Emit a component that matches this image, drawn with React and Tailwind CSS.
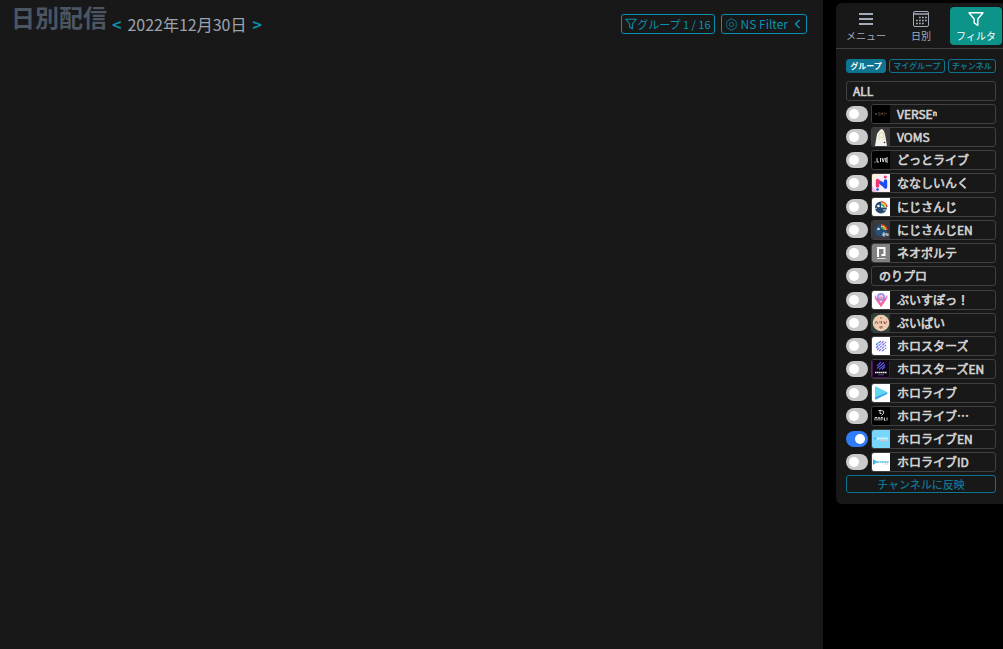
import React, { useState } from "react";

const ART = {
  verse: (
    <>
      <rect width="18" height="18" fill="#000" />
      <path d="M3 8l1 2 1-2M6 8h2M6 10h2" stroke="#666" strokeWidth=".7" fill="none" />
      <path d="M9 10V8h1.5v2M11.5 8h1.5M11.5 10h1.5" stroke="#8a4c34" strokeWidth=".7" fill="none" />
      <path d="M14 8v1" stroke="#4a7fb5" strokeWidth=".8" />
    </>
  ),
  voms: (
    <>
      <rect width="18" height="18" fill="#3a3a3a" />
      <path d="M3 18L5 6Q8 1 10 1Q12 2 13 6L15 18Z" fill="#f4f2ea" />
      <circle cx="9.5" cy="7" r="2.5" fill="none" stroke="#ded58e" strokeWidth=".9" />
      <path d="M7 10v2M12 10v2" stroke="#d8d28f" strokeWidth=".8" />
      <circle cx="12.5" cy="14.5" r=".8" fill="#222" />
    </>
  ),
  live: (
    <>
      <rect width="18" height="18" fill="#000" />
      <path d="M2.5 11.2h1M5 7v4h2M8.5 7v4M10 7l1.2 4L12.400 7M16 7h-2.200v4H16M14 9h2" stroke="#ddd" fill="none" />
    </>
  ),
  nana: (
    <>
      <rect width="18" height="18" fill="#fff0f7" />
      <path d="M0 0h7L0 8z" fill="#fff3d4" />
      <path d="M0 18v-6l5 6z" fill="#f7b5e7" />
      <path d="M5.500 12V6.500L10 10" stroke="#f2356d" strokeWidth="3.400" fill="none" strokeLinejoin="round" strokeLinecap="round" />
      <path d="M9.500 9l4 4V7" stroke="#1450f5" strokeWidth="3.400" fill="none" strokeLinejoin="round" strokeLinecap="round" />
      <circle cx="13.300" cy="3" r="1.500" fill="#f2356d" />
      <circle cx="5.500" cy="15.500" r="1.300" fill="#1450f5" />
    </>
  ),
  niji: (
    <>
      <rect width="18" height="18" fill="#fff" />
      <path d="M9 3.500a6 6 0 1 0 6 6H9z" fill="#244a70" />
      <path d="M9 3.800a6 6 0 0 1 6 5.200" stroke="#ee3d31" strokeWidth="1.600" fill="none" />
      <path d="M9 5.300a4.500 4.500 0 0 1 4.500 3.700" stroke="#f7c62c" strokeWidth="1.600" fill="none" />
      <path d="M9 6.800A3 3 0 0 1 12 9" stroke="#37ad75" strokeWidth="1.600" fill="none" />
      <circle cx="6.500" cy="8" r="1.300" fill="#fff" />
      <path d="M3 11l2-1M11 12h4" stroke="#fff" strokeWidth=".8" fill="none" />
    </>
  ),
  nijien: (
    <>
      <rect width="18" height="18" fill="#38383d" />
      <path d="M9 3.500a6 6 0 1 0 6 6H9z" fill="#22517b" />
      <path d="M9 3.800a6 6 0 0 1 6 5.200" stroke="#ee3d31" strokeWidth="1.600" fill="none" />
      <path d="M9 5.300a4.500 4.500 0 0 1 4.500 3.700" stroke="#f7c62c" strokeWidth="1.600" fill="none" />
      <path d="M9 6.800A3 3 0 0 1 12 9" stroke="#37ad75" strokeWidth="1.600" fill="none" />
      <circle cx="6.500" cy="8" r="1.300" fill="#ddd" />
      <path d="M13 12h-2v3h2M11 13.500h2M14 15v-3l2 3v-3" stroke="#eee" strokeWidth=".8" fill="none" />
    </>
  ),
  neo: (
    <>
      <rect width="18" height="18" fill="#808080" />
      <path d="M6 13V4h6.500v7H9.500" stroke="#fff" strokeWidth="2" fill="none" />
      <path d="M5 14.500h8.500" stroke="#ddd" strokeWidth="1" />
    </>
  ),
  vspo: (
    <>
      <rect width="18" height="18" fill="#fff" />
      <path d="M4 7l5 7 5-7" stroke="#f06ba6" strokeWidth="2.500" fill="none" />
      <circle cx="9" cy="6" r="3.200" fill="#eec3ea" stroke="#8f91e7" strokeWidth="1.500" />
      <path d="M3.500 4.500v3M14.500 4.500v3M7.500 6.500l1.500 2 1.500-2" stroke="#ef83b7" strokeWidth="1.500" fill="none" />
    </>
  ),
  vpai: (
    <>
      <rect width="18" height="18" fill="#2c4437" />
      <circle cx="9" cy="9" r="8.300" fill="#efccb0" />
      <path d="M3 10l1.500-3L6 10M7 8h2M9.500 10V7M11 8h1.500v2M13.500 10l1-3M9 3v2M7 13h4M9 12v3" stroke="#925c54" strokeWidth=".9" fill="none" />
    </>
  ),
  stars: (
    <>
      <rect width="18" height="18" fill="#fff" />
      <path d="M4 8l5-4M4 11l8-7M5 13l9-8M7 14l7-6M10 14l4-3" stroke="#766fe9" strokeWidth="1.100" strokeDasharray="3 .6" />
      <path d="M4 7l3-2M4 10l4-3" stroke="#62b9e8" strokeWidth=".8" />
    </>
  ),
  starsen: (
    <>
      <rect width="18" height="18" fill="#0c0413" />
      <path d="M.5 1v16.500h17V1" stroke="#4a1458" fill="none" />
      <path d="M5 6l4-4M5 8.500l7-6M7 9.500l6-5M10 9.500l3-3" stroke="#5d55dc" strokeWidth="1.100" />
      <path d="M3 12.500h12" stroke="#eee" strokeWidth="1.500" strokeDasharray="1.500 .4" />
      <path d="M6 14.800h6" stroke="#9674a8" strokeWidth=".6" />
    </>
  ),
  holo: (
    <>
      <rect width="18" height="18" fill="#fff" />
      <path d="M4 2.500Q3 2 3 4v9l12-5z" fill="#5cd8ef" />
      <path d="M3 13v2q1 1 2 0l10-5q1-1 0-2z" fill="#35a8ef" />
    </>
  ),
  dev: (
    <>
      <rect width="18" height="18" fill="#000" />
      <path d="M6.500 3.500h3q3 0 2 3L9.500 8.500M8 3.500v3h1.500" stroke="#ddd" fill="none" />
      <path d="M3 13.500v-3h2v3M6 11h2M7 10v3.500M9 13.500v-3h2M9.500 12h2M12.500 10.500v3h1M15 10.500v3" stroke="#ddd" strokeWidth=".9" fill="none" />
    </>
  ),
  holoen: (
    <>
      <rect width="18" height="18" fill="#77d6fa" />
      <path d="M2 7l2.500 1.500L2 10z" fill="#3eb2e8" />
      <path d="M5 8.500h11" stroke="#d9f5ff" strokeWidth="2.200" strokeDasharray="2 .4" />
      <path d="M8 10.500h7" stroke="#f2bccb" strokeWidth=".8" />
    </>
  ),
  holoid: (
    <>
      <rect width="18" height="18" fill="#fff" />
      <path d="M1 6v6l4.500-3z" fill="#37b8eb" />
      <path d="M5 9h12" stroke="#78cfeb" strokeWidth="2.200" strokeDasharray="2 .4" />
      <path d="M12 11h4" stroke="#e5a7a7" strokeWidth=".6" />
    </>
  ),
};

const GROUPS = [
  ["VERSEⁿ", "verse"],
  ["VOMS", "voms"],
  ["どっとライブ", "live"],
  ["ななしいんく", "nana"],
  ["にじさんじ", "niji"],
  ["にじさんじEN", "nijien"],
  ["ネオポルテ", "neo"],
  ["のりプロ", null],
  ["ぶいすぽっ！", "vspo"],
  ["ぶいぱい", "vpai"],
  ["ホロスターズ", "stars"],
  ["ホロスターズEN", "starsen"],
  ["ホロライブ", "holo"],
  ["ホロライブ…", "dev"],
  ["ホロライブEN", "holoen"],
  ["ホロライブID", "holoid"],
];

function Funnel({ className }) {
  return (
    <svg viewBox="0 0 16 16" className={className} fill="none" stroke="currentColor" strokeWidth="1.4" strokeLinejoin="round" aria-hidden="true">
      <path d="M1 1.700h14L9.800 8v6.300L6.200 12V8z" />
    </svg>
  );
}

function Gear({ className }) {
  return (
    <svg viewBox="0 0 14 14" className={className} fill="none" stroke="currentColor" strokeWidth=".8" strokeLinejoin="round" aria-hidden="true">
      <path d="M5.600 1h2.800l.7 1.300 1.500.1 1.700 2.300-.5 1.200L13 7l-1.200 1.200.5 1.200-1.700 2.200-1.500.1L8.400 13H5.600l-.7-1.300-1.500-.1-1.700-2.200.5-1.200L1 7l1.200-1.100-.5-1.200 1.700-2.300 1.500-.1z" />
      <circle cx="7" cy="7" r="2.300" />
    </svg>
  );
}

function MenuIcon() {
  return (
    <svg viewBox="0 0 16 16" className="size-4" stroke="currentColor" strokeWidth="2" aria-hidden="true">
      <path d="M1 3h14M1 8h14M1 13h14" />
    </svg>
  );
}

function CalendarIcon() {
  return (
    <svg viewBox="0 0 16 16" className="size-4" fill="none" stroke="currentColor" aria-hidden="true">
      <rect x=".5" y=".5" width="15" height="15" rx="1.500" />
      <path d="M1 3h14" strokeWidth="1.500" />
      <path d="M6 6.500h8M3 9.500h11M3 12.500h8" strokeWidth="1.700" strokeDasharray="1.800 1.200" />
    </svg>
  );
}

function Tab({ icon, label, active }) {
  return (
    <button
      type="button"
      className={
        "flex h-[38px] min-w-0 flex-1 flex-col items-center gap-[2px] rounded pt-1 text-[10px] leading-[14px] " +
        (active ? "bg-[#0d9488] text-white" : "text-[#a3abb8]")
      }
    >
      {icon}
      <span className="whitespace-nowrap">{label}</span>
    </button>
  );
}

function Group({ name, art, on, onToggle }) {
  return (
    <li className="flex items-center gap-[3px]">
      <input
        type="checkbox"
        aria-label={name}
        checked={on}
        onChange={onToggle}
        className="h-4 w-[22px] shrink-0 appearance-none rounded-full bg-[#cacaca] p-[3px] before:block before:size-[10px] before:rounded-full before:bg-white checked:bg-[#2f7cf6] checked:before:ml-[6px]"
      />
      <button
        type="button"
        className="flex h-5 min-w-0 flex-1 items-center overflow-hidden rounded-[3px] border border-[#404040] text-left text-xs leading-[18px] text-[#d4d4d4] [-webkit-text-stroke:0.05em]"
      >
        {art && (
          <svg viewBox="0 0 18 18" className="size-[18px] shrink-0" aria-hidden="true">
            {ART[art]}
          </svg>
        )}
        <span className="truncate pl-[7px]">{name}</span>
      </button>
    </li>
  );
}

export default function App() {
  const [selected, setSelected] = useState(["ホロライブEN"]);
  const toggle = (name) =>
    setSelected((s) => (s.includes(name) ? s.filter((n) => n !== name) : [...s, name]));

  return (
    <div className="flex min-h-screen gap-[13px] bg-black font-['Noto_Sans_CJK_JP',sans-serif]">
      <main className="min-w-0 flex-1 bg-[#181818]">
        <header className="flex items-start justify-between pl-[11px] pr-4">
          <div className="flex items-start">
            <h1 className="text-2xl font-bold leading-[34px] text-[#4b5563]">日別配信</h1>
            <div className="flex items-center gap-[6px] pl-[5px] pt-3 text-base leading-6 text-[#9ca3af]">
              <button type="button" aria-label="前の日" className="font-bold text-[#0891b2]">&lt;</button>
              <time dateTime="2022-12-30">2022年12月30日</time>
              <button type="button" aria-label="次の日" className="font-bold text-[#0891b2]">&gt;</button>
            </div>
          </div>
          <div className="flex gap-[6px] pt-[14px] text-[#0891b2]">
            <button type="button" className="flex h-5 items-center rounded-[3px] border border-[#0891b2] px-[3px] text-[11px] leading-[18px]">
              <Funnel className="size-3" />
              グループ 1 / 16
            </button>
            <button type="button" className="flex h-5 items-center gap-[3px] rounded-[3px] border border-[#0891b2] px-[3px] text-xs leading-[18px]">
              <Gear className="size-[13px]" />
              NS Filter
              <svg viewBox="0 0 12 12" className="size-3" fill="none" stroke="currentColor" strokeWidth="1.500" aria-hidden="true">
                <path d="M8.500 2l-4 4 4 4" />
              </svg>
            </button>
          </div>
        </header>
      </main>

      <aside className="mt-[3px] w-[167px] shrink-0 self-start rounded-l-md bg-[#181818]">
        <nav className="flex gap-[3px] border-b border-[#404040] pb-[3px] pl-1 pr-px pt-1">
          <Tab icon={<MenuIcon />} label="メニュー" />
          <Tab icon={<CalendarIcon />} label="日別" />
          <Tab icon={<Funnel className="size-4" />} label="フィルタ" active />
        </nav>
        <div className="pb-[11px] pl-[10px] pr-[7px] pt-[10px]">
          <div className="flex gap-[3px] text-[8px] font-bold leading-3 text-[#0e7490]">
            <button type="button" className="h-[14px] flex-auto whitespace-nowrap rounded-[3px] border border-[#0e7490] bg-[#0e7490] text-white">グループ</button>
            <button type="button" className="h-[14px] flex-auto whitespace-nowrap rounded-[3px] border border-[#0e7490]">マイグループ</button>
            <button type="button" className="h-[14px] flex-auto whitespace-nowrap rounded-[3px] border border-[#0e7490]">チャンネル</button>
          </div>
          <button type="button" className="mt-2 block h-5 w-full rounded-[3px] border border-[#404040] px-[6px] text-left text-xs leading-[18px] text-[#d4d4d4] [-webkit-text-stroke:0.05em]">
            ALL
          </button>
          <ul className="grid h-[373px] auto-rows-fr pt-px">
            {GROUPS.map(([name, art]) => (
              <Group key={name} name={name} art={art} on={selected.includes(name)} onToggle={() => toggle(name)} />
            ))}
          </ul>
          <button type="button" className="mt-px block h-[18px] w-full rounded-[3px] border border-[#0e7490] text-[11px] font-medium leading-4 text-[#0e7490]">
            チャンネルに反映
          </button>
        </div>
      </aside>
    </div>
  );
}
